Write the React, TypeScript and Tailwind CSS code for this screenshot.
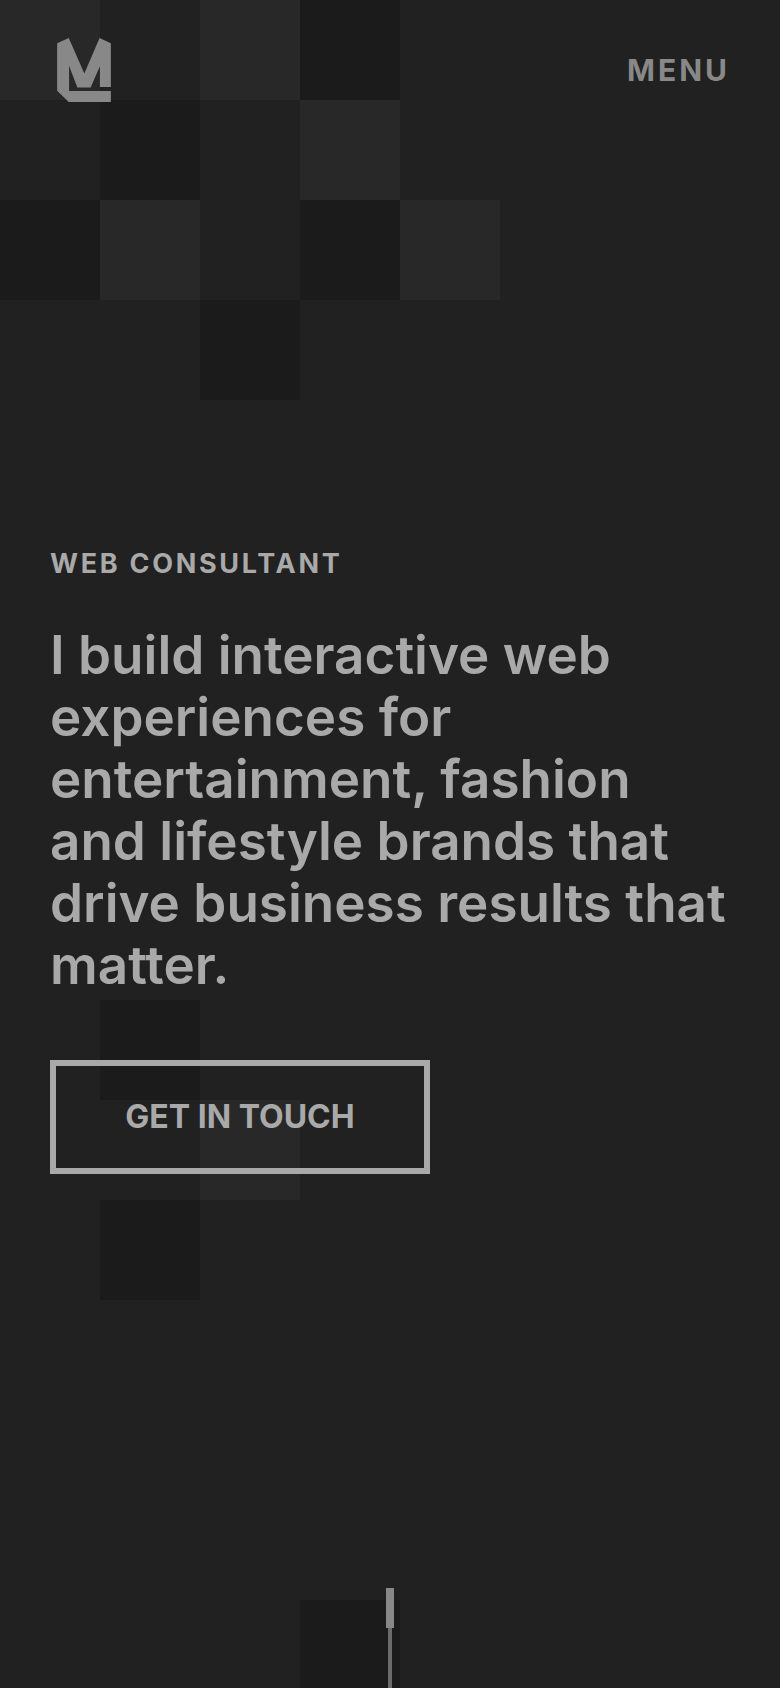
const tiles = [
  { id: 1, className: 'col-start-1 row-start-1 bg-[#282828]' },
  { id: 2, className: 'col-start-3 row-start-1 bg-[#282828]' },
  { id: 3, className: 'col-start-4 row-start-1 bg-[#1b1b1b]' },
  { id: 4, className: 'col-start-2 row-start-2 bg-[#1b1b1b]' },
  { id: 5, className: 'col-start-4 row-start-2 bg-[#282828]' },
  { id: 6, className: 'col-start-1 row-start-3 bg-[#1b1b1b]' },
  { id: 7, className: 'col-start-2 row-start-3 bg-[#282828]' },
  { id: 8, className: 'col-start-4 row-start-3 bg-[#1b1b1b]' },
  { id: 9, className: 'col-start-5 row-start-3 bg-[#282828]' },
  { id: 10, className: 'col-start-3 row-start-4 bg-[#1b1b1b]' },
  { id: 11, className: 'col-start-2 row-start-11 bg-[#1b1b1b]' },
  { id: 12, className: 'col-start-3 row-start-12 bg-[#282828]' },
  { id: 13, className: 'col-start-2 row-start-13 bg-[#1b1b1b]' },
  { id: 14, className: 'col-start-4 row-start-17 bg-[#1b1b1b]' },
];

function Logo() {
  return (
    <svg viewBox="51 53 162 193" className="w-[54px] h-16" fill="currentColor" aria-hidden="true">
      <path d="M51 69L86 53L133 160L179 53L213 69V201H180V138L152 202H112L87 137V213H213V246H86L51 212Z" />
    </svg>
  );
}

export default function App() {
  return (
    <div className="relative isolate flex min-h-screen flex-col overflow-hidden bg-[#212121] font-['Inter',sans-serif] text-[#a9a9a9]">
      {/* checkered backdrop */}
      <div className="absolute inset-0 -z-10 grid auto-rows-[100px] grid-cols-[repeat(auto-fill,100px)] overflow-hidden" aria-hidden="true">
        {tiles.map((t) => (
          <div key={t.id} className={t.className} />
        ))}
      </div>

      <header className="flex items-center justify-between px-[50px] pt-[38px] text-[#888888]">
        <a href="#home" aria-label="Home" className="px-[7px]">
          <Logo />
        </a>
        <button type="button" className="text-[30px] leading-10 font-bold tracking-widest">MENU</button>
      </header>

      <main className="flex-1 px-[50px] pt-[442px]">
        <p className="text-[27px] leading-10 font-bold tracking-widest">WEB CONSULTANT</p>
        <h1 className="mt-10 text-[53px] leading-[62px] font-semibold">
          I build interactive web experiences for entertainment, fashion and lifestyle brands that drive business results that matter.
        </h1>
        <a
          href="#contact"
          className="mt-16 flex h-[114px] w-[380px] items-center justify-center border-6 border-current text-[32px] font-bold"
        >
          GET IN TOUCH
        </a>
      </main>

      {/* scroll hint */}
      <div className="flex flex-col items-center" aria-hidden="true">
        <div className="h-10 w-2 bg-[#888888]" />
        <div className="h-[60px] w-1 bg-[#6b6b6b]" />
      </div>
    </div>
  );
}
